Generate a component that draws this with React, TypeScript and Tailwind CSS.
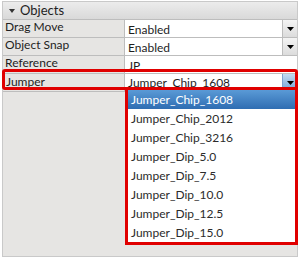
import React from 'react';

type Row = { label: string; value: string; combo: boolean };

const rows: Row[] = [
  { label: 'Drag Move', value: 'Enabled', combo: true },
  { label: 'Object Snap', value: 'Enabled', combo: true },
  { label: 'Reference', value: 'JP', combo: false },
];

const options = [
  'Jumper_Chip_1608',
  'Jumper_Chip_2012',
  'Jumper_Chip_3216',
  'Jumper_Dip_5.0',
  'Jumper_Dip_7.5',
  'Jumper_Dip_10.0',
  'Jumper_Dip_12.5',
  'Jumper_Dip_15.0',
];

const Arrow = () => (
  <svg width="7" height="4" viewBox="0 0 7 4">
    <path d="M0 0h7L3.5 4z" fill="#000" />
  </svg>
);

/**
 * Property grid with an open combo list
 */
const App: React.FC = () => {
  return (
    <div
      className="relative w-[300px] h-[258px] bg-white overflow-hidden text-[12px] text-[#1e1e1e]"
      style={{ fontFamily: 'Lato, "Noto Sans", sans-serif' }}
    >
      <div className="absolute left-[2px] top-[1px] w-[296px] h-[256px] border border-[#c9c9c9] bg-[#e6e5e3] flex flex-col">
        {/* Category header */}
        <div className="h-[18px] flex items-center gap-[5px] pl-[6px] bg-gradient-to-b from-[#ececec] to-[#d9d9d9] border-b border-[#bdbdbd]">
          <svg width="6" height="4" viewBox="0 0 6 4">
            <path d="M0 0h6L3 4z" fill="#333" />
          </svg>
          <span className="leading-none text-[13px]">Objects</span>
        </div>

        {rows.map((r) => (
          <div key={r.label} className="h-[18px] flex border-b border-[#bdbdbd]">
            <div className="w-[122px] pl-[2px] leading-[14px] border-r border-[#bdbdbd]">{r.label}</div>
            <div className="flex-1 bg-white flex items-center">
              <span className="pl-[3px] pt-[3px] flex-1 leading-[14px]">{r.value}</span>
              {r.combo && (
                <div className="w-[15px] h-[17px] border-l border-[#bdbdbd] bg-gradient-to-b from-[#f4f4f4] to-[#dcdcdc] flex items-center justify-center">
                  <Arrow />
                </div>
              )}
            </div>
          </div>
        ))}

        {/* Jumper row (active) */}
        <div className="h-[18px] flex border-b border-[#bdbdbd]">
          <div className="w-[122px] pl-[3px] pt-[1px] leading-[14px] border-r border-[#bdbdbd]">Jumper</div>
          <div className="flex-1 bg-white flex items-center">
            <span className="pl-[3px] flex-1 leading-[14px]">Jumper_Chip_1608</span>
            <div className="w-[15px] h-[17px] border-l border-[#7da2ce] bg-gradient-to-b from-[#c4dcf3] to-[#6fa3d6] flex items-center justify-center">
              <Arrow />
            </div>
          </div>
        </div>
      </div>

      {/* open list */}
      <div className="absolute left-[125px] top-[87px] w-[173px] h-[158px] border-[3px] border-[#e00000] bg-white">
        {options.map((o, i) => (
          <div
            key={o}
            className={
              i === 0
                ? 'h-[19px] pl-[3px] flex items-center text-white bg-gradient-to-b from-[#5a9ad6] to-[#2e6db2]'
                : 'h-[19px] pl-[3px] flex items-center text-[#2b2b2b]'
            }
          >
            {o}
          </div>
        ))}
      </div>

      {/* highlight around the Jumper row */}
      <div className="absolute left-[2px] top-[69px] w-[296px] h-[21px] border-[3px] border-[#e00000] rounded-[3px]" />
    </div>
  );
};

export default App;
